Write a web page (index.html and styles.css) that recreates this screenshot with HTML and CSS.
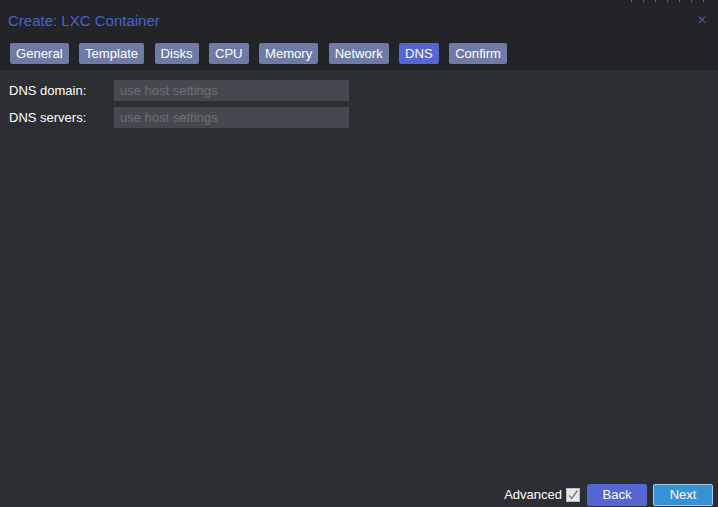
FILE: index.html
```html
<!DOCTYPE html>
<html lang="en">
<head>
    <meta charset="UTF-8">
    <title>Create: LXC Container</title>
    <link rel="stylesheet" href="styles.css">
</head>
<body>
    <div class="window">
        <div class="header">
            <div class="ticks"><span></span><span></span><span></span><span></span><span></span><span></span><span></span></div>
            <div class="title-row">
                <div class="title">Create: LXC Container</div>
                <div class="close">&#x2715;</div>
            </div>
            <div class="tabs">
                <div class="tab">General</div>
                <div class="tab">Template</div>
                <div class="tab">Disks</div>
                <div class="tab">CPU</div>
                <div class="tab">Memory</div>
                <div class="tab">Network</div>
                <div class="tab active">DNS</div>
                <div class="tab">Confirm</div>
            </div>
        </div>

        <div class="content">
            <div class="field">
                <label>DNS domain:</label>
                <input type="text" placeholder="use host settings">
            </div>
            <div class="field">
                <label>DNS servers:</label>
                <input type="text" placeholder="use host settings">
            </div>
        </div>

        <div class="footer">
            <span class="advanced">Advanced</span>
            <span class="checkbox">
                <svg width="12" height="12" viewBox="0 0 12 12"><path d="M2 6.5 L4.8 9.5 L10.5 1.5" fill="none" stroke="#7a7d82" stroke-width="1.4"/></svg>
            </span>
            <button class="btn back">Back</button>
            <button class="btn next">Next</button>
        </div>
    </div>
</body>
</html>
```

FILE: styles.css
```css
body {
    margin: 0;
    padding: 0;
    font-family: 'Liberation Sans', Arial, sans-serif;
    font-size: 13px;
    color: #fff;
    background: #2b2e33;
    overflow: hidden;
}

.window {
    width: 718px;
    height: 507px;
    display: flex;
    flex-direction: column;
}

.header {
    position: relative;
    background: #222428;
    height: 70px;
    box-sizing: border-box;
    padding: 0 10px 0 10px;
}

.ticks {
    position: absolute;
    top: 0;
    left: 631px;
    display: flex;
    gap: 11px;
}

.ticks span {
    width: 1px;
    height: 2px;
    background: #5a6290;
}

.title-row {
    display: flex;
    justify-content: space-between;
    align-items: center;
    height: 40px;
}

.title {
    color: #4d60cf;
    font-size: 15px;
    margin-left: -2px;
}

.close {
    color: #4a568c;
    font-size: 12px;
    margin-right: 1px;
}

.tabs {
    display: flex;
    gap: 10.4px;
    margin-top: 3px;
}

.tab {
    background: #6f7ba6;
    color: #fff;
    height: 21px;
    line-height: 21px;
    padding: 0 6px;
    border-radius: 2px;
    font-size: 13.1px;
}

.tab.active {
    background: #5466d2;
}

.content {
    flex: 1;
    padding: 10px 0 0 9px;
}

.field {
    display: flex;
    align-items: center;
    margin-bottom: 6px;
}

.field label {
    width: 105px;
    font-size: 13px;
}

.field input {
    width: 235px;
    height: 21px;
    box-sizing: border-box;
    border: none;
    background: #45484e;
    color: #fff;
    font-family: 'Liberation Sans', Arial, sans-serif;
    font-size: 13px;
    padding: 0 6px;
    outline: none;
}

.field input::placeholder {
    color: #6c6f75;
}

.footer {
    display: flex;
    align-items: center;
    justify-content: flex-end;
    padding: 0 5px 1px 0;
    height: 23px;
}

.advanced {
    font-size: 13px;
    margin-right: 4px;
}

.checkbox {
    width: 12px;
    height: 12px;
    background: #e8e8e8;
    border: 1px solid #bbb;
    margin-right: 7px;
    display: flex;
}

.btn {
    height: 22px;
    width: 60px;
    border-radius: 2px;
    color: #fff;
    font-family: 'Liberation Sans', Arial, sans-serif;
    font-size: 13px;
    padding: 0;
    cursor: pointer;
}

.back {
    background: #5466d2;
    border: 1px solid #5466d2;
    margin-right: 6px;
}

.next {
    background: #3592d4;
    border: 1px solid #a4c8ea;
}
```
